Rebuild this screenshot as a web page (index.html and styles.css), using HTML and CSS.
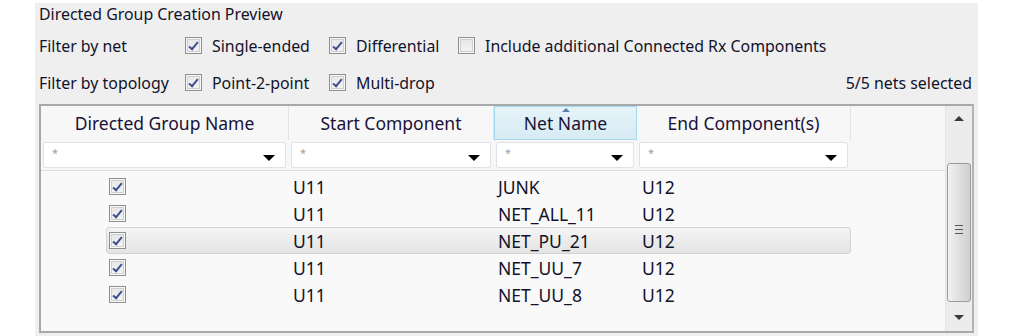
FILE: index.html
```html
<!DOCTYPE html>
<html>
<head>
<meta charset="utf-8">
<link rel="stylesheet" href="styles.css">
</head>
<body>
<div class="panel">
  <div class="title">Directed Group Creation Preview</div>
  <div class="frow">
    <div class="flabel">Filter by net</div>
    <div class="opt w1"><span class="cb on"></span><span>Single-ended</span></div>
    <div class="opt w2"><span class="cb on"></span><span>Differential</span></div>
    <div class="opt"><span class="cb"></span><span>Include additional Connected Rx Components</span></div>
  </div>
  <div class="frow">
    <div class="flabel">Filter by topology</div>
    <div class="opt w1"><span class="cb on"></span><span>Point-2-point</span></div>
    <div class="opt w2"><span class="cb on"></span><span>Multi-drop</span></div>
    <div class="count">5/5 nets selected</div>
  </div>
  <div class="grid">
    <div class="main">
      <div class="head">
        <div class="hrow">
          <div class="hc c1">Directed Group Name</div>
          <div class="hc c2">Start Component</div>
          <div class="hc c3 sorted"><span class="sort"></span>Net Name</div>
          <div class="hc c4">End Component(s)</div>
          <div class="hfill"></div>
        </div>
        <div class="filt">
          <div class="fc c1"><div class="combo"><span class="star">*</span><span class="dd"></span></div></div>
          <div class="fc c2"><div class="combo"><span class="star">*</span><span class="dd"></span></div></div>
          <div class="fc c3"><div class="combo"><span class="star">*</span><span class="dd"></span></div></div>
          <div class="fc c4"><div class="combo"><span class="star">*</span><span class="dd"></span></div></div>
          <div class="hfill"></div>
        </div>
      </div>
      <div class="body">
        <div class="row"><div class="d1"><span class="cb on"></span></div><div class="d2">U11</div><div class="d3">JUNK</div><div class="d4">U12</div></div>
        <div class="row"><div class="d1"><span class="cb on"></span></div><div class="d2">U11</div><div class="d3">NET_ALL_11</div><div class="d4">U12</div></div>
        <div class="row sel"><div class="d1"><span class="cb on"></span></div><div class="d2">U11</div><div class="d3">NET_PU_21</div><div class="d4">U12</div></div>
        <div class="row"><div class="d1"><span class="cb on"></span></div><div class="d2">U11</div><div class="d3">NET_UU_7</div><div class="d4">U12</div></div>
        <div class="row"><div class="d1"><span class="cb on"></span></div><div class="d2">U11</div><div class="d3">NET_UU_8</div><div class="d4">U12</div></div>
      </div>
    </div>
    <div class="sb">
      <div class="arr up"></div>
      <div class="track">
        <div class="thumb"><div class="grip"></div></div>
      </div>
      <div class="arr down"></div>
    </div>
  </div>
</div>
</body>
</html>
```
FILE: styles.css
```css
html, body { margin: 0; padding: 0; background: #ffffff; }
body {
  font-family: "Noto Sans", "Open Sans", sans-serif;
  font-size: 15.9px;
  color: #12122a;
}
.panel {
  margin: 3px 0 0 35px;
  width: 935px;
  height: 333px;
  padding: 0 4px;
  background: #efefef;
  box-sizing: content-box;
}
.title { height: 24px; line-height: 22px; }
.frow { display: flex; align-items: center; height: 37px; }
.flabel { width: 146px; }
.opt { display: flex; align-items: center; gap: 10px; }
.w1 { width: 144px; }
.w2 { width: 129px; }
.count { margin-left: auto; padding-right: 2px; }
.cb {
  width: 15px; height: 15px;
  border: 1px solid #8e8f8f;
  background: linear-gradient(#e6e6e6, #f4f4f4);
  box-shadow: inset 0 0 0 1px #f8f8f8, inset 0 0 0 2px #cfcfcf;
  display: inline-block;
  position: relative;
  flex: none;
}
.cb.on::after {
  content: "";
  position: absolute;
  left: 5px; top: 2px;
  width: 3px; height: 8px;
  border: solid #3a4e94;
  border-width: 0 2px 2px 0;
  transform: rotate(40deg);
}
.grid {
  margin-top: 3px;
  height: 225px;
  border: 2px solid #a8a8a8;
  border-right-color: #b4b4b4;
  display: flex;
  background: #f9f9f9;
  font-size: 17.5px;
}
.main { flex: 1; display: flex; flex-direction: column; }
.head { height: 64px; border-bottom: 1px solid #dcdcdc; background: #f7f7f7; }
.hrow { display: flex; height: 34px; }
.hc {
  display: flex; align-items: center; justify-content: center;
  border-right: 1px solid #e2e2e2;
  position: relative;
  box-sizing: border-box;
  color: #1a1236;
}
.c1 { width: 248px; }
.c2 { width: 205px; }
.c3 { width: 143px; }
.c4 { width: 214px; }
.hfill { flex: 1; }
.sorted {
  background: linear-gradient(#e6f3f9, #d7ebf4);
  border: 1px solid #a3d8f0;
}
.sort {
  position: absolute; top: 1px; left: 50%; margin-left: -4px;
  width: 0; height: 0;
  border-left: 4px solid transparent; border-right: 4px solid transparent;
  border-bottom: 4px solid #5a80a8;
}
.filt { display: flex; height: 30px; }
.fc { box-sizing: border-box; padding: 2px 3px 2px 2px; }
.combo {
  height: 26px; box-sizing: border-box;
  border: 1px solid #dfe2e6;
  border-radius: 2px;
  background: #ffffff;
  display: flex; align-items: center; justify-content: space-between;
  padding: 0 10px 0 8px;
}
.star { color: #a0a0a0; font-size: 11px; margin-top: -5px; }
.dd {
  width: 0; height: 0; margin-top: 6px;
  border-left: 6px solid transparent; border-right: 6px solid transparent;
  border-top: 6px solid #000;
}
.body { padding-top: 2px; }
.row {
  display: flex; align-items: center;
  height: 27px; box-sizing: border-box;
  margin-left: 65px; width: 745px;
  border: 1px solid transparent; border-radius: 3px;
}
.row.sel {
  background: linear-gradient(#f4f4f4, #e4e4e4);
  border-color: #d3d3d3;
}
.d1 { width: 183px; padding-left: 2px; box-sizing: border-box; display: flex; }
.d2 { width: 205px; padding-left: 3px; box-sizing: border-box; }
.d3 { width: 143px; padding-left: 3px; box-sizing: border-box; }
.d4 { padding-left: 4px; }
.sb {
  width: 26px; display: flex; flex-direction: column;
  background: #ececec;
  border-left: 1px solid #e4e4e4;
}
.arr { height: 24px; position: relative; }
.arr::after {
  content: ""; position: absolute; left: 50%; margin-left: -5px;
  border-left: 5px solid transparent; border-right: 5px solid transparent;
}
.up::after { top: 10px; border-bottom: 5px solid #3a3a3a; }
.down::after { top: 8px; border-top: 5px solid #3a3a3a; }
.track { flex: 1; padding: 33px 1px 5px 1px; display: flex; }
.thumb {
  flex: 1;
  border: 1px solid #9a9a9a; border-radius: 3px;
  background: linear-gradient(90deg, #f2f2f2, #dcdcdc 60%, #d0d0d0);
  display: flex; align-items: center; justify-content: center;
}
.grip {
  width: 8px; height: 7px;
  border-top: 1px solid #555; border-bottom: 1px solid #555;
  position: relative; margin-top: -6px;
}
.grip::after {
  content: ""; position: absolute; left: 0; right: 0; top: 3px;
  border-top: 1px solid #555;
}
```
